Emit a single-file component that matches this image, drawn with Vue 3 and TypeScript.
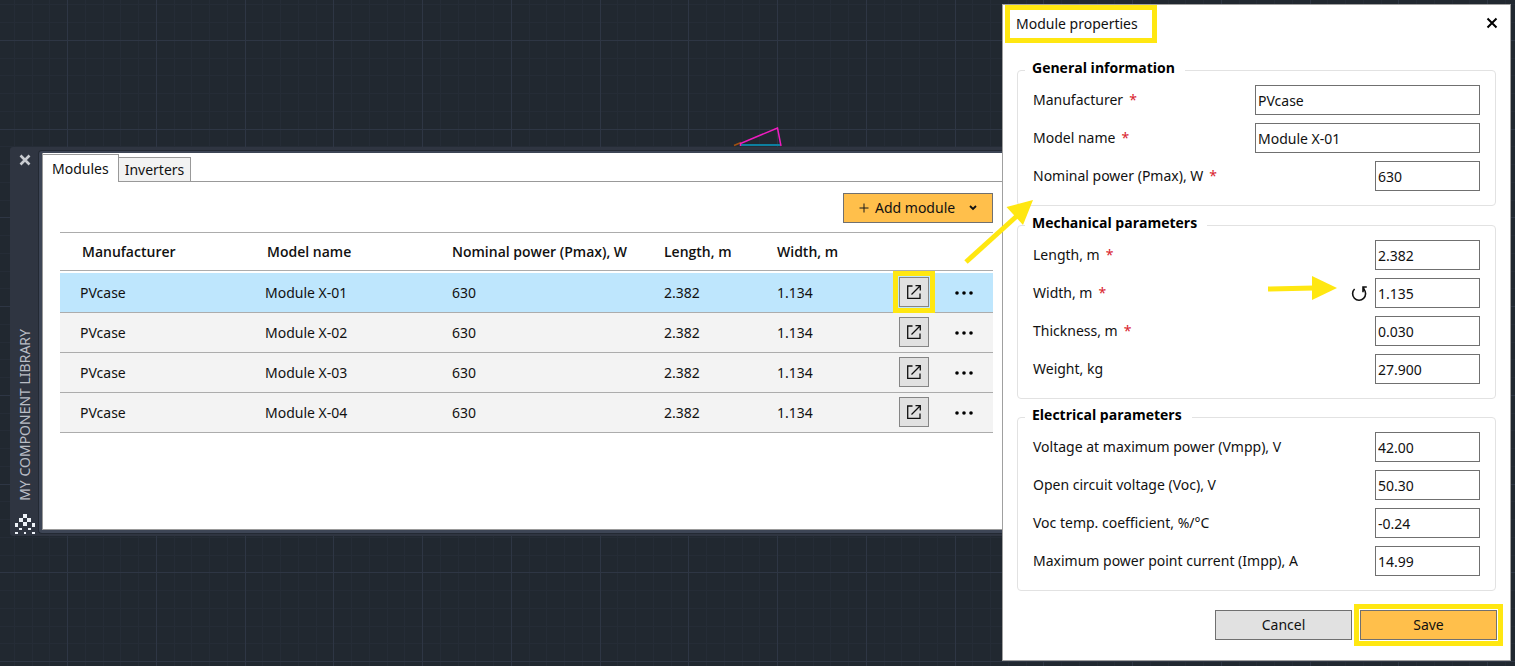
<script setup lang="ts">
import { ref } from 'vue'

interface Module {
  manufacturer: string
  model: string
  power: string
  length: string
  width: string
}

interface Field {
  id: string
  label: string
  value: string
  required?: boolean
  wide?: boolean
  changed?: boolean
}

interface Group {
  title: string
  fields: Field[]
}

const activeTab = ref('Modules')
const tabs = ['Modules', 'Inverters']
const selected = ref(0)

const modules = ref<Module[]>(
  ['01', '02', '03', '04'].map((n) => ({
    manufacturer: 'PVcase',
    model: `Module X-${n}`,
    power: '630',
    length: '2.382',
    width: '1.134',
  })),
)

const groups = ref<Group[]>([
  {
    title: 'General information',
    fields: [
      { id: 'manufacturer', label: 'Manufacturer', value: 'PVcase', required: true, wide: true },
      { id: 'model', label: 'Model name', value: 'Module X-01', required: true, wide: true },
      { id: 'pmax', label: 'Nominal power (Pmax), W', value: '630', required: true },
    ],
  },
  {
    title: 'Mechanical parameters',
    fields: [
      { id: 'length', label: 'Length, m', value: '2.382', required: true },
      { id: 'width', label: 'Width, m', value: '1.135', required: true, changed: true },
      { id: 'thickness', label: 'Thickness, m', value: '0.030', required: true },
      { id: 'weight', label: 'Weight, kg', value: '27.900' },
    ],
  },
  {
    title: 'Electrical parameters',
    fields: [
      { id: 'vmpp', label: 'Voltage at maximum power (Vmpp), V', value: '42.00' },
      { id: 'voc', label: 'Open circuit voltage (Voc), V', value: '50.30' },
      { id: 'coef', label: 'Voc temp. coefficient, %/°C', value: '-0.24' },
      { id: 'impp', label: 'Maximum power point current (Impp), A', value: '14.99' },
    ],
  },
])

// Drawing grid: every fifth line is a major one.
const STEP = 17.75
const minor: string[] = []
const major: string[] = []
for (let i = -5; i < 220; i++) {
  const x = Math.floor(67.7 + i * STEP)
  const y = Math.floor(40.4 + i * STEP)
  const target = i % 5 === 0 ? major : minor
  target.push(`M${x} 0h1v4000h-1z`, `M0 ${y}h4000v1H0z`)
}
const minorPath = minor.join('')
const majorPath = major.join('')
</script>

<template>
  <main class="canvas">
    <svg class="grid" aria-hidden="true">
      <path :d="minorPath" fill="#252c36" />
      <path :d="majorPath" fill="#2e3644" />
    </svg>
    <svg class="sketch" width="50" height="20" viewBox="0 0 50 20" fill="none" aria-hidden="true">
      <path d="M1 18.5L8 15.5" stroke="#a0500f" stroke-width="1.5" />
      <path d="M8 18H47" stroke="#0d7f9f" stroke-width="2" />
      <path d="M7.500 19V16.500L44.500 1L48 19" stroke="#f01cc0" stroke-width="1.500" />
    </svg>

    <section class="palette">
      <aside class="rail">
        <button class="rail-close" aria-label="Close palette">
          <svg width="12" height="12" viewBox="0 0 12 12">
            <path d="M1.500 1.500L10.500 10.500M10.500 1.500L1.500 10.500" stroke="#c9ccd1" stroke-width="2.600" />
          </svg>
        </button>
        <span class="rail-title">MY COMPONENT LIBRARY</span>
        <svg width="20" height="20" viewBox="0 0 20 20" fill="#eef2f8" shape-rendering="crispEdges" aria-hidden="true">
          <path d="M8 0h4v4h-4zM4 4h4v4h-4zM12 4h4v4h-4zM0 9h3v4h-3zM8 8h4v4h-4zM17 9h3v4h-3zM4 14h3v2h-3zM13 14h3v2h-3zM0 18h3v2h-3zM9 18h2v2h-2zM17 18h3v2h-3z" />
        </svg>
      </aside>

      <div class="panel">
        <div class="tabs" role="tablist">
          <button
            v-for="tab in tabs"
            :key="tab"
            class="tab"
            :class="{ active: tab === activeTab }"
            role="tab"
            :aria-selected="tab === activeTab"
            @click="activeTab = tab"
          >
            {{ tab }}
          </button>
        </div>

        <div class="content">
          <button class="add">
            <svg width="10" height="10" viewBox="0 0 10 10" aria-hidden="true">
              <path d="M5 .5V9.500M.5 5H9.500" stroke="#1a1a1a" />
            </svg>
            <span>Add module</span>
            <svg class="chevron" width="8" height="6" viewBox="0 0 8 6" fill="none" aria-hidden="true">
              <path d="M1 1L4 4L7 1" stroke="#111" stroke-width="1.800" />
            </svg>
          </button>

          <table>
            <colgroup>
              <col class="c-maker" />
              <col class="c-model" />
              <col class="c-power" />
              <col class="c-length" />
              <col class="c-width" />
              <col class="c-open" />
              <col class="c-more" />
            </colgroup>
            <thead>
              <tr>
                <th class="inset">Manufacturer</th>
                <th class="inset">Model name</th>
                <th>Nominal power (Pmax), W</th>
                <th>Length, m</th>
                <th>Width, m</th>
                <th></th>
                <th></th>
              </tr>
            </thead>
            <tbody>
              <tr
                v-for="(m, i) in modules"
                :key="m.model"
                :class="{ selected: i === selected }"
                @click="selected = i"
              >
                <td>{{ m.manufacturer }}</td>
                <td>{{ m.model }}</td>
                <td>{{ m.power }}</td>
                <td>{{ m.length }}</td>
                <td>{{ m.width }}</td>
                <td class="action">
                  <button class="open" :class="{ marked: i === 0 }" aria-label="Open module">
                    <svg width="16" height="16" viewBox="0 0 16 16" fill="none" stroke="#111" stroke-width="1.300" aria-hidden="true">
                      <path d="M6.500 2H1.700V14.300H14V9.500" />
                      <path d="M5.500 10.500L14 2M9.500 1.700H14.300V6.500" />
                    </svg>
                  </button>
                </td>
                <td class="action">
                  <button class="more" aria-label="More actions">
                    <svg width="18" height="4" viewBox="0 0 18 4" aria-hidden="true">
                      <circle cx="2" cy="2" r="1.800" />
                      <circle cx="9" cy="2" r="1.800" />
                      <circle cx="16" cy="2" r="1.800" />
                    </svg>
                  </button>
                </td>
              </tr>
            </tbody>
          </table>
        </div>
      </div>
    </section>

    <section class="dialog" role="dialog" aria-labelledby="dialog-title">
      <header>
        <h1 id="dialog-title">Module properties</h1>
        <button class="dialog-close" aria-label="Close">
          <svg width="12" height="12" viewBox="0 0 12 12">
            <path d="M1.500 1.500L10.500 10.500M10.500 1.500L1.500 10.500" stroke="#000" stroke-width="2" />
          </svg>
        </button>
      </header>

      <form @submit.prevent>
        <fieldset v-for="group in groups" :key="group.title">
          <legend>{{ group.title }}</legend>
          <div class="rows">
            <div v-for="field in group.fields" :key="field.id" class="row">
              <label :for="field.id">{{ field.label }}<span v-if="field.required" class="star">*</span></label>
              <button v-if="field.changed" type="button" class="reset" aria-label="Reset value">
                <svg width="18" height="18" viewBox="0 0 18 18" fill="none" stroke="#111" stroke-width="1.600" aria-hidden="true">
                  <path d="M4.600 5A6.500 6.500 0 1 0 13.800 5.200" />
                  <path d="M16.800 3H13V8.200M13.300 3.300L14.500 6.500" />
                </svg>
              </button>
              <input :id="field.id" v-model="field.value" type="text" :class="{ wide: field.wide }" />
            </div>
          </div>
        </fieldset>

        <footer>
          <button type="button" class="btn">Cancel</button>
          <button type="submit" class="btn save">Save</button>
        </footer>
      </form>

      <svg class="arrow arrow-open" width="70" height="66" viewBox="0 0 70 66" aria-hidden="true">
        <path d="M2 63L54 16" stroke="#ffe711" stroke-width="5" />
        <path d="M69 1L42.500 8L59 26z" fill="#ffe711" />
      </svg>
      <svg class="arrow arrow-width" width="70" height="26" viewBox="0 0 70 26" aria-hidden="true">
        <path d="M0 14L46 13" stroke="#ffe711" stroke-width="5" />
        <path d="M44 1V25L69 13z" fill="#ffe711" />
      </svg>
    </section>
  </main>
</template>

<style>
body {
  margin: 0;
  background: #212830;
}
</style>

<style scoped>
* {
  box-sizing: border-box;
}

.canvas {
  position: relative;
  display: flex;
  align-items: flex-start;
  min-height: 100vh;
  padding: 4px 4px 5px 10px;
  overflow: hidden;
  background: #212830;
  color: #111;
  font-family: 'Noto Sans', 'Open Sans', sans-serif;
  font-size: 14px;
  line-height: 20px;
}

button,
input {
  margin: 0;
  padding: 0;
  border: 0;
  border-radius: 0;
  background: none;
  color: inherit;
  font: inherit;
}

svg {
  display: block;
}

.grid {
  position: absolute;
  inset: 0;
  width: 100%;
  height: 100%;
}

.sketch {
  position: absolute;
  left: 733px;
  top: 127px;
}

/* Component library palette */
.palette {
  position: relative;
  display: flex;
  flex: 1;
  min-width: 0;
  margin-top: 143px;
  padding: 3px 0 2px;
  border-radius: 3px 0 0 3px;
  background: #2f3541;
}

.rail {
  display: flex;
  flex-direction: column;
  align-items: center;
  width: 28px;
  padding-top: 4px;
  padding-left: 2px;
}

.rail-close {
  margin-bottom: auto;
}

.rail-title {
  margin-bottom: 13px;
  color: #b9bdc5;
  writing-mode: vertical-rl;
  transform: rotate(180deg);
}

.panel {
  flex: 1;
  min-width: 0;
  border: solid #232933;
  border-width: 1px 0 1px 1px;
  border-radius: 4px 0 0 4px;
  background: #3d4555;
  padding: 2px 0 3px 3px;
}

.tabs {
  display: flex;
  align-items: flex-end;
  padding-top: 1px;
  border-left: 1px solid #999;
  background: linear-gradient(#999, #999) 0 100% / 100% 1px no-repeat #fff;
}

.tab {
  height: 25px;
  padding: 0 6px;
  border: 1px solid #999;
  border-left: 0;
  background: #f2f2f2;
}

.tab.active {
  height: 28px;
  padding: 0 9px;
  border-width: 1px 1px 0 0;
  background: #fff;
}

.content {
  display: flex;
  flex-direction: column;
  padding: 11px 9px 96px 17px;
  border: solid #999;
  border-width: 0 0 1px 1px;
  background: #fff;
}

.add {
  display: flex;
  align-items: center;
  align-self: flex-end;
  gap: 6px;
  width: 150px;
  height: 30px;
  margin-bottom: 9px;
  padding: 0 15px;
  border: 1px solid #707070;
  background: #ffbf4b;
}

.chevron {
  margin-left: auto;
}

table {
  width: 100%;
  table-layout: fixed;
  border-collapse: separate;
  border-spacing: 0;
}

.c-maker { width: 185px; }
.c-model { width: 187px; }
.c-power { width: 212px; }
.c-length { width: 113px; }
.c-width { width: 133px; }
.c-open { width: 48px; }
.c-more { width: 55px; }

th {
  height: 39px;
  padding: 0 0 0 20px;
  border: solid #acacac;
  border-width: 1px 0;
  font-family: 'Open Sans', 'Noto Sans', sans-serif;
  font-weight: 600;
  text-align: left;
  white-space: nowrap;
}

th.inset {
  padding-left: 22px;
}

tbody::before {
  content: '';
  display: block;
  height: 2px;
}

td {
  height: 40px;
  padding: 0 0 0 20px;
  border-bottom: 1px solid #acacac;
  background: #f3f3f3;
}

.selected td {
  background: #bee6fd;
}

td.action {
  padding: 0 0 1px;
}

td.action:last-child {
  padding-right: 4px;
}

.open {
  display: grid;
  place-items: center;
  width: 30px;
  height: 30px;
  margin: 0 auto;
  border: 1px solid #858585;
  background: #e1e1e1;
}

.more {
  display: block;
  margin: 0 auto;
  padding: 9px 0 8px;
}

.marked,
.save {
  outline: 5px solid #ffe711;
  outline-offset: 1px;
}

/* Module properties dialog */
.dialog {
  position: relative;
  flex: none;
  width: 509px;
  padding: 0 14px 20px;
  border: 1px solid #a0a0a0;
  background: #fff;
}

header {
  display: flex;
  align-items: flex-start;
  justify-content: space-between;
  margin: 0 -2px 15px -12px;
}

h1 {
  margin: 0;
  padding: 4px 14px 4px 6px;
  border: 5px solid #ffe711;
  font-size: 14px;
  font-weight: 400;
  line-height: 20px;
}

.dialog-close {
  padding-top: 12px;
}

fieldset {
  min-width: 0;
  margin: 0 0 7px;
  padding: 3px 7px 14px;
  border: 1px solid #e2e2e2;
  border-radius: 4px;
}

fieldset + fieldset {
  margin-bottom: 6px;
}

legend {
  padding: 0 10px 4px 7px;
  color: #000;
  font-family: 'Open Sans', 'Noto Sans', sans-serif;
  font-weight: 700;
}

.rows {
  display: grid;
  gap: 8px;
  padding: 0 8px;
}

.row {
  display: flex;
  align-items: center;
}

label {
  margin-right: auto;
}

.star {
  margin-left: 6px;
  color: #d9232e;
}

input {
  width: 105px;
  height: 30px;
  padding: 0 2px;
  border: 1px solid #707070;
  background: #fff;
}

input.wide {
  width: 225px;
}

.reset {
  margin-right: 7px;
}

footer {
  display: flex;
  justify-content: flex-end;
  gap: 8px;
  margin: 19px -1px 0 0;
}

.btn {
  width: 137px;
  height: 30px;
  border: 1px solid #707070;
  background: #e1e1e1;
}

.save {
  background: #ffbf4b;
}

.arrow {
  position: absolute;
  pointer-events: none;
}

.arrow-open {
  left: -39px;
  top: 194px;
}

.arrow-width {
  left: 265px;
  top: 270px;
}
</style>
